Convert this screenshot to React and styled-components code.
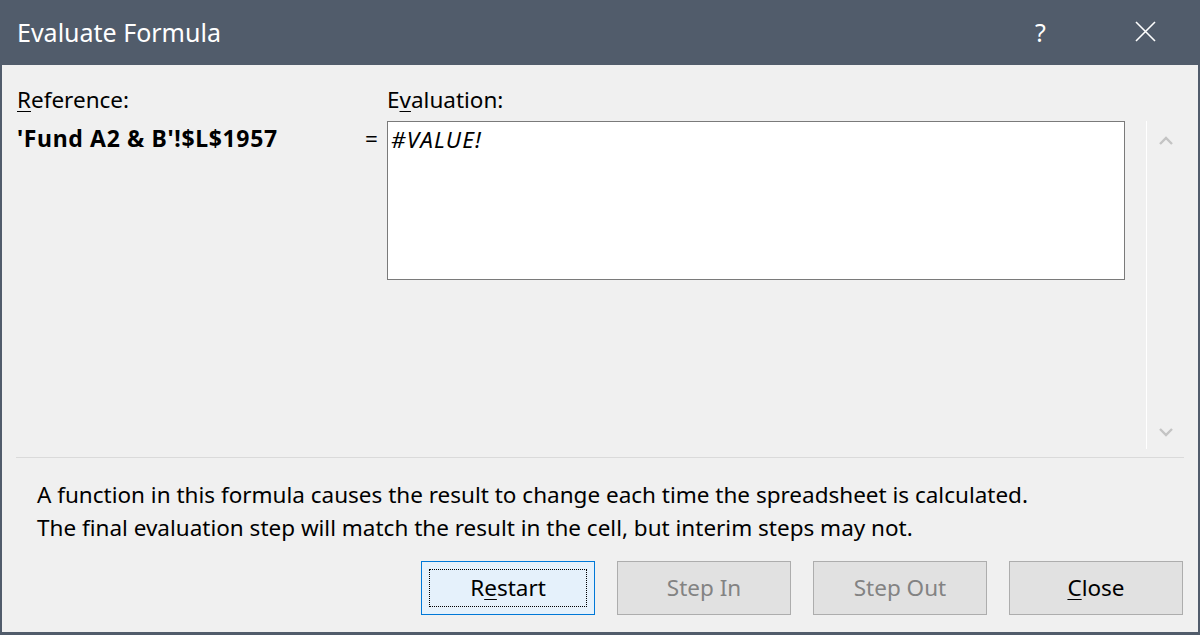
import React from 'react';
import styled, { createGlobalStyle } from 'styled-components';

const Global = createGlobalStyle`
  html, body {
    margin: 0;
    padding: 0;
    background: #f0f0f0;
  }
  body {
    font-family: "Noto Sans", "Open Sans", sans-serif;
  }
`;

const Window = styled.div`
  width: 1200px;
  height: 635px;
  box-sizing: border-box;
  border: 2px solid #515c6b;
  border-top: none;
  border-bottom-width: 3px;
  background: #f0f0f0;
  display: flex;
  flex-direction: column;
  overflow: hidden;
`;

const TitleBar = styled.div`
  height: 65px;
  flex: none;
  background: #515c6b;
  display: flex;
  align-items: center;
  padding-left: 15px;
  color: #ffffff;
`;

const Title = styled.div`
  flex: 1;
  font-size: 25px;
  padding-bottom: 2px;
`;

const TitleButton = styled.div`
  width: 105px;
  height: 65px;
  display: flex;
  align-items: center;
  justify-content: center;
  font-size: 25px;
  padding-bottom: 2px;
  box-sizing: border-box;
`;

const Upper = styled.div`
  display: flex;
  height: 392px;
  flex: none;
  padding-left: 15px;
`;

const RefCol = styled.div`
  width: 370px;
  display: flex;
  flex-direction: column;
`;

const Label = styled.div`
  font-size: 22.5px;
  color: #000;
  height: 30px;
  line-height: 30px;
  margin-top: 20px;
`;

const Key = styled.span`
  text-decoration: underline;
  text-underline-offset: 3px;
  text-decoration-thickness: 1px;
`;

const RefRow = styled.div`
  display: flex;
  align-items: center;
  height: 30px;
  margin-top: 8px;
`;

const RefValue = styled.div`
  flex: 1;
  font-weight: 700;
  font-size: 23px;
  letter-spacing: 0.65px;
  color: #000;
`;

const Equals = styled.div`
  width: 22px;
  font-size: 22.5px;
  color: #000;
`;

const EvalCol = styled.div`
  width: 738px;
  display: flex;
  flex-direction: column;
`;

const TextBox = styled.div`
  margin-top: 6px;
  height: 159px;
  box-sizing: border-box;
  border: 1px solid #7a7a7a;
  background: #ffffff;
  padding: 0 3px;
  font-size: 22.5px;
  line-height: 36px;
  font-style: italic;
  letter-spacing: 1.2px;
  color: #000;
`;

const ScrollBar = styled.div`
  margin-left: 21px;
  margin-top: 56px;
  height: 328px;
  width: 38px;
  border-left: 1px solid #ffffff;
  display: flex;
  flex-direction: column;
  justify-content: space-between;
  align-items: center;
  padding: 15px 0 12px;
  box-sizing: border-box;
`;

const Separator = styled.div`
  margin: 0 14px 0 14px;
  height: 1px;
  background: #dadada;
  flex: none;
`;

const Info = styled.div`
  padding-left: 35px;
  margin-top: 20px;
  font-size: 22.5px;
  line-height: 33px;
  color: #000;
`;

const ButtonRow = styled.div`
  display: flex;
  justify-content: flex-end;
  gap: 22px;
  padding-right: 15px;
  margin-top: 17px;
`;

const Button = styled.div`
  width: 174px;
  height: 54px;
  box-sizing: border-box;
  border: 1px solid ${p => (p.$default ? '#0078d7' : '#adadad')};
  background: ${p => (p.$default ? '#e5f1fb' : '#e1e1e1')};
  color: ${p => (p.$disabled ? '#838383' : '#000')};
  font-size: 22.5px;
  display: flex;
  align-items: center;
  justify-content: center;
  position: relative;
  padding-bottom: 1px;
`;

const FocusRing = styled.div`
  position: absolute;
  inset: 7px;
  border: 1px dotted #000;
`;

const Chevron = ({ up }) => (
  <svg width="14" height="9" viewBox="0 0 14 9">
    <polyline
      points={up ? '1,8 7,2 13,8' : '1,1 7,7 13,1'}
      fill="none"
      stroke="#c4c4c4"
      strokeWidth="2.4"
    />
  </svg>
);

export default function App() {
  return (
    <Window>
      <Global />
      <TitleBar>
        <Title>Evaluate Formula</Title>
        <TitleButton>?</TitleButton>
        <TitleButton>
          <svg width="21" height="21" viewBox="0 0 21 21">
            <path d="M1 1 L20 20 M20 1 L1 20" stroke="#fff" strokeWidth="1.6" />
          </svg>
        </TitleButton>
      </TitleBar>
      <Upper>
        <RefCol>
          <Label><Key>R</Key>eference:</Label>
          <RefRow>
            <RefValue>'Fund A2 &amp; B'!$L$1957</RefValue>
            <Equals>=</Equals>
          </RefRow>
        </RefCol>
        <EvalCol>
          <Label>E<Key>v</Key>aluation:</Label>
          <TextBox>#VALUE!</TextBox>
        </EvalCol>
        <ScrollBar>
          <Chevron up />
          <Chevron />
        </ScrollBar>
      </Upper>
      <Separator />
      <Info>
        A function in this formula causes the result to change each time the spreadsheet is calculated.
        <br />
        The final evaluation step will match the result in the cell, but interim steps may not.
      </Info>
      <ButtonRow>
        <Button $default>
          <FocusRing />
          R<Key>e</Key>start
        </Button>
        <Button $disabled>Step In</Button>
        <Button $disabled>Step Out</Button>
        <Button><Key>C</Key>lose</Button>
      </ButtonRow>
    </Window>
  );
}
